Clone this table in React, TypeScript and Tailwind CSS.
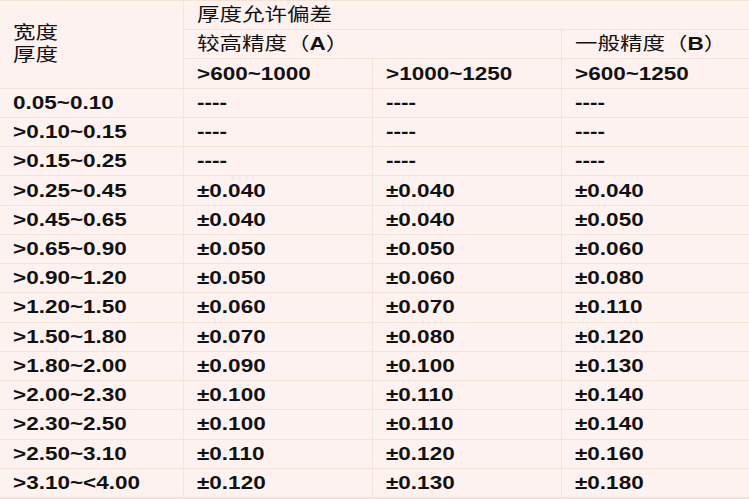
import React from "react";

const rows: [string, string, string, string][] = [
  ["0.05~0.10", "----", "----", "----"],
  [">0.10~0.15", "----", "----", "----"],
  [">0.15~0.25", "----", "----", "----"],
  [">0.25~0.45", "±0.040", "±0.040", "±0.040"],
  [">0.45~0.65", "±0.040", "±0.040", "±0.050"],
  [">0.65~0.90", "±0.050", "±0.050", "±0.060"],
  [">0.90~1.20", "±0.050", "±0.060", "±0.080"],
  [">1.20~1.50", "±0.060", "±0.070", "±0.110"],
  [">1.50~1.80", "±0.070", "±0.080", "±0.120"],
  [">1.80~2.00", "±0.090", "±0.100", "±0.130"],
  [">2.00~2.30", "±0.100", "±0.110", "±0.140"],
  [">2.30~2.50", "±0.100", "±0.110", "±0.140"],
  [">2.50~3.10", "±0.110", "±0.120", "±0.160"],
  [">3.10~<4.00", "±0.120", "±0.130", "±0.180"],
];

function T({ children, bold = true }: { children: React.ReactNode; bold?: boolean }) {
  return (
    <span
      className={
        "inline-block origin-left scale-x-125 whitespace-nowrap text-[18px] leading-[22px] text-[#111] " +
        (bold ? "font-bold" : "font-normal")
      }
    >
      {children}
    </span>
  );
}

function Cell({
  children,
  className = "",
}: {
  children: React.ReactNode;
  className?: string;
}) {
  return (
    <div className={"flex items-center bg-[#fef2f0] pl-[13px] " + className}>{children}</div>
  );
}

export default function App() {
  return (
    <div
      className="w-[749px] h-[499px] overflow-hidden bg-[#fef2f0]"
      style={{ fontFamily: '"Liberation Sans", Arial, "Noto Sans CJK SC", sans-serif' }}
    >
      <div className="grid h-[499px] w-[749px] grid-cols-[183px_188px_188px_1fr] grid-rows-[repeat(17,minmax(0,1fr))] gap-px bg-[#f4e3d6] pt-px pb-[2px]">
        <Cell className="row-span-3 flex-col !items-start justify-center">
          <T bold={false}>宽度</T>
          <T bold={false}>厚度</T>
        </Cell>
        <Cell className="col-span-3">
          <T bold={false}>厚度允许偏差</T>
        </Cell>
        <Cell className="col-span-2">
          <T bold={false}>
            较高精度（<b>A</b>）
          </T>
        </Cell>
        <Cell>
          <T bold={false}>
            一般精度（<b>B</b>）
          </T>
        </Cell>
        <Cell>
          <T>&gt;600~1000</T>
        </Cell>
        <Cell>
          <T>&gt;1000~1250</T>
        </Cell>
        <Cell>
          <T>&gt;600~1250</T>
        </Cell>
        {rows.map((r, i) => (
          <React.Fragment key={i}>
            {r.map((c, j) => (
              <Cell key={j}>
                <T>{c}</T>
              </Cell>
            ))}
          </React.Fragment>
        ))}
      </div>
    </div>
  );
}
